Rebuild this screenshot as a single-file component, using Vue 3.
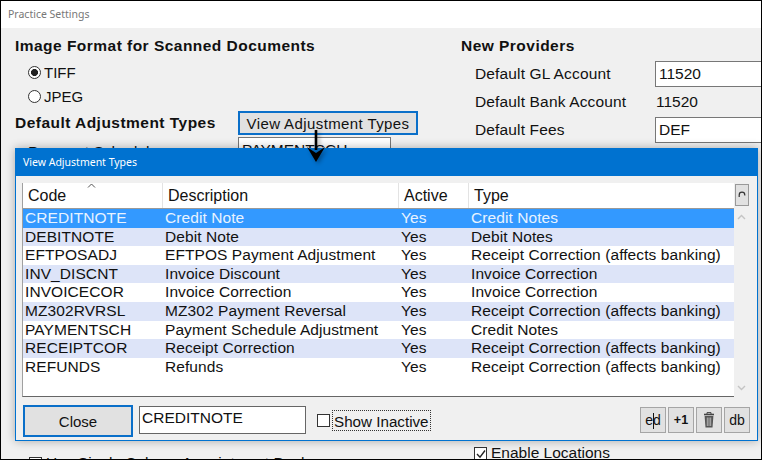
<script setup>
const rows = [
  ['CREDITNOTE', 'Credit Note', 'Yes', 'Credit Notes'],
  ['DEBITNOTE', 'Debit Note', 'Yes', 'Debit Notes'],
  ['EFTPOSADJ', 'EFTPOS Payment Adjustment', 'Yes', 'Receipt Correction (affects banking)'],
  ['INV_DISCNT', 'Invoice Discount', 'Yes', 'Invoice Correction'],
  ['INVOICECOR', 'Invoice Correction', 'Yes', 'Invoice Correction'],
  ['MZ302RVRSL', 'MZ302 Payment Reversal', 'Yes', 'Receipt Correction (affects banking)'],
  ['PAYMENTSCH', 'Payment Schedule Adjustment', 'Yes', 'Credit Notes'],
  ['RECEIPTCOR', 'Receipt Correction', 'Yes', 'Receipt Correction (affects banking)'],
  ['REFUNDS', 'Refunds', 'Yes', 'Receipt Correction (affects banking)'],
]
</script>

<template>
  <div class="window">
    <div class="titlebar">Practice Settings</div>

    <div class="columns">
      <div class="col-left">
        <div class="heading">Image Format for Scanned Documents</div>
        <label class="radio"><span class="dot on"></span>TIFF</label>
        <label class="radio"><span class="dot"></span>JPEG</label>
        <div class="adj-row">
          <div class="heading">Default Adjustment Types</div>
          <button class="view-btn">View Adjustment Types</button>
        </div>
        <div class="schedule-row">
          <span>Payment Schedule</span>
          <div class="field schedule-field">PAYMENTSCH</div>
        </div>
      </div>

      <div class="col-right">
        <div class="heading">New Providers</div>
        <div class="prov-row first">
          <span class="prov-label">Default GL Account</span>
          <div class="field prov-field">11520</div>
        </div>
        <div class="prov-row">
          <span class="prov-label">Default Bank Account</span>
          <span class="prov-value">11520</span>
        </div>
        <div class="prov-row">
          <span class="prov-label">Default Fees</span>
          <div class="field prov-field">DEF</div>
        </div>
      </div>
    </div>

    <div class="bottom-row">
      <div class="check-item left-check"><span class="box"></span>Use Single Column Appointment Book</div>
      <div class="check-item">
        <span class="box">
          <svg width="12" height="12" viewBox="0 0 12 12"><path d="M2 6l3 3.2L10 2.5" fill="none" stroke="#222" stroke-width="1.4" /></svg>
        </span>
        Enable Locations
      </div>
    </div>

    <!-- 弹出对话框 -->
    <div class="dialog">
      <div class="dialog-title">View Adjustment Types</div>
      <div class="dialog-body">
        <div class="list-area">
          <div class="list">
            <div class="list-head">
              <div class="hcell c-code">Code<span class="sort">
                <svg width="9" height="5" viewBox="0 0 9 5"><path d="M1 4.5L4.5 1 8 4.5" fill="none" stroke="#555" /></svg>
              </span></div>
              <div class="hcell c-desc">Description</div>
              <div class="hcell c-active">Active</div>
              <div class="hcell c-type">Type</div>
            </div>
            <div class="list-rows">
              <div v-for="(r, i) in rows" :key="r[0]" class="row" :class="{ selected: i === 0, alt: i % 2 === 1 }">
                <div class="c-code">{{ r[0] }}</div>
                <div class="c-desc">{{ r[1] }}</div>
                <div class="c-active">{{ r[2] }}</div>
                <div class="c-type">{{ r[3] }}</div>
              </div>
            </div>
          </div>
          <div class="scrollbar">
            <div class="refresh">
              <svg width="10" height="10" viewBox="0 0 10 10"><path d="M2.2 7V5a2.8 2.8 0 0 1 5.6 0v.6" fill="none" stroke="#333" stroke-width="1.2" /></svg>
            </div>
            <svg class="chev" width="9" height="6" viewBox="0 0 9 6"><path d="M1 5l3.5-3.5L8 5" fill="none" stroke="#c4c4c4" stroke-width="1.4" /></svg>
            <svg class="chev down" width="9" height="6" viewBox="0 0 9 6"><path d="M1 1l3.5 3.5L8 1" fill="none" stroke="#c4c4c4" stroke-width="1.4" /></svg>
          </div>
        </div>

        <div class="dialog-foot">
          <button class="close-btn">Close</button>
          <div class="code-input">CREDITNOTE</div>
          <span class="box inactive-box"></span>
          <span class="inactive-label">Show Inactive</span>
          <div class="tools">
            <button class="tool">e<span class="caret"></span>d</button>
            <button class="tool plus">+1</button>
            <button class="tool">
              <svg width="16" height="18" viewBox="0 0 16 18">
                <path d="M3 3.5h10" stroke="#444" stroke-width="1.6" />
                <path d="M6 3V1.6h4V3" fill="none" stroke="#444" />
                <path d="M3.6 5h8.8l-.9 11.5H4.5z" fill="#555" />
                <path d="M6.3 6.5v8.5M8 6.5v8.5M9.7 6.5v8.5" stroke="#ddd" stroke-width=".7" />
              </svg>
            </button>
            <button class="tool">db</button>
          </div>
        </div>
      </div>
    </div>

    <!-- 标注箭头 -->
    <svg class="arrow" width="20" height="34" viewBox="0 0 20 34">
      <path d="M8.7 0h2.6v20H8.7z" fill="#000" />
      <path d="M1 17l9 15 9-15-9 6z" fill="#000" />
    </svg>
  </div>
</template>

<style scoped>
.window {
  position: relative;
  width: 762px;
  height: 460px;
  box-sizing: border-box;
  border: 1px solid #000;
  background: #f0f0f0;
  overflow: hidden;
  font-family: "Liberation Sans", Arial, sans-serif;
  font-size: 15.5px;
  color: #111;
}

.titlebar {
  height: 27px;
  background: #fff;
  padding-left: 7px;
  line-height: 26px;
  font-family: "Noto Sans", sans-serif;
  font-size: 10.5px;
  color: #777;
}

.columns {
  display: flex;
  height: 418px;
  padding-left: 14px;
}

.col-left {
  width: 446px;
  flex: none;
  padding-top: 8px;
}

.col-right {
  flex: none;
  padding-top: 8px;
}

.heading {
  height: 20px;
  line-height: 20px;
  font-weight: bold;
  font-size: 15.5px;
  letter-spacing: 0.47px;
  white-space: nowrap;
}

.radio {
  display: flex;
  align-items: center;
  height: 24px;
  padding-left: 13px;
  font-size: 15px;
}

.radio:first-of-type {
  margin-top: 4px;
}

.dot {
  width: 11px;
  height: 11px;
  margin-right: 3px;
  border: 1px solid #333;
  border-radius: 50%;
  background: #fff;
  box-sizing: content-box;
}

.dot.on {
  background: radial-gradient(circle, #222 0 3.2px, #fff 3.8px);
}

.adj-row {
  display: flex;
  align-items: center;
  height: 24px;
  margin-top: 3px;
}

.adj-row .heading {
  width: 223px;
}

.view-btn {
  width: 180px;
  height: 24px;
  padding: 0;
  border: 2px solid #0a6fc9;
  background: #e1e1e1;
  font-family: inherit;
  font-size: 15px;
  letter-spacing: 0.4px;
  color: #111;
}

.schedule-row {
  display: flex;
  align-items: flex-start;
  margin-top: 2px;
  padding-left: 13px;
}

.schedule-row > span {
  width: 210px;
  padding-top: 6px;
}

.field {
  box-sizing: border-box;
  border: 1px solid #777;
  background: #fff;
  padding-left: 3px;
  white-space: nowrap;
}

.schedule-field {
  width: 153px;
  height: 26px;
  line-height: 24px;
}

.prov-row {
  display: flex;
  align-items: center;
  height: 28px;
  padding-left: 14px;
}

.prov-row.first {
  margin-top: 4px;
}

.prov-label {
  width: 180px;
  letter-spacing: 0.15px;
  white-space: nowrap;
}

.prov-field {
  width: 120px;
  height: 26px;
  line-height: 24px;
}

.prov-value {
  padding-left: 1px;
}

.bottom-row {
  display: flex;
  justify-content: space-between;
  padding-left: 28px;
}

.check-item {
  display: flex;
  align-items: center;
  gap: 4px;
  height: 14px;
  width: 287px;
  white-space: nowrap;
}

.left-check {
  margin-top: 10px;
  width: auto;
}

.box {
  display: block;
  flex: none;
  width: 11px;
  height: 11px;
  border: 1px solid #333;
  background: #fff;
}

.box svg {
  display: block;
}

.dialog {
  position: absolute;
  left: 14px;
  top: 147px;
  width: 743px;
  height: 293px;
  box-sizing: border-box;
  display: flex;
  flex-direction: column;
  border: 1px solid #0072d0;
  background: #f0f0f0;
  box-shadow: 0 0 9px rgba(0, 0, 0, 0.3);
}

.dialog-title {
  height: 27px;
  flex: none;
  background: #0072d0;
  color: #fff;
  padding-left: 7px;
  line-height: 27px;
  font-family: "Noto Sans", sans-serif;
  font-size: 10.5px;
}

.dialog-body {
  flex: 1;
  padding: 7px 7px 0 6px;
  display: flex;
  flex-direction: column;
}

.list-area {
  display: flex;
  height: 214px;
}

.list {
  width: 713px;
  box-sizing: border-box;
  background: #fff;
  border-left: 1px solid #a0a0a0;
  border-bottom: 1px solid #666;
}

.list-head {
  display: flex;
  height: 26px;
  border-bottom: 1px solid #999;
  box-sizing: border-box;
  font-size: 16px;
}

.hcell {
  position: relative;
  padding-left: 5px;
  line-height: 25px;
  border-right: 1px solid #e3e3e3;
  box-sizing: border-box;
}

.hcell.c-type {
  border-right: none;
}

.sort {
  position: absolute;
  left: 64px;
  top: 0;
}

.sort svg {
  display: block;
}

.c-code {
  width: 140px;
  flex: none;
}

.c-desc {
  width: 236px;
  flex: none;
}

.c-active {
  width: 70px;
  flex: none;
}

.c-type {
  flex: 1;
}

.row {
  display: flex;
  height: 18.6px;
  line-height: 18.6px;
  padding-left: 2px;
  font-size: 15.5px;
  letter-spacing: 0.08px;
  white-space: nowrap;
}

.row.alt {
  background: #dde4f8;
}

.row.selected {
  background: #3399ff;
  color: #e8f3ff;
}

.scrollbar {
  position: relative;
  width: 16px;
  flex: none;
}

.refresh {
  position: absolute;
  left: 1px;
  top: 1px;
  width: 14px;
  height: 22px;
  box-sizing: border-box;
  border: 1px solid #999;
  background: #e1e1e1;
  display: flex;
  align-items: center;
  justify-content: center;
}

.chev {
  position: absolute;
  left: 3px;
  top: 31px;
}

.chev.down {
  top: 202px;
}

.dialog-foot {
  display: flex;
  align-items: flex-start;
  padding-left: 1px;
  margin-top: 8px;
}

.close-btn {
  width: 110px;
  height: 32px;
  padding: 0;
  border: 2px solid #0a6fc9;
  background: #e1e1e1;
  font-family: inherit;
  font-size: 15px;
  color: #111;
}

.code-input {
  width: 167px;
  height: 28px;
  box-sizing: border-box;
  margin: 1px 0 0 6px;
  border: 1px solid #666;
  background: #fff;
  padding-left: 2px;
  line-height: 22px;
}

.inactive-box {
  margin: 9px 2px 0 11px;
}

.inactive-label {
  margin-top: 5px;
  padding: 0 1px;
  height: 21px;
  line-height: 21px;
  box-sizing: border-box;
  border: 1px dotted #333;
  font-size: 15.2px;
}

.tools {
  display: flex;
  gap: 2px;
  margin-left: auto;
  margin-top: 2px;
}

.tool {
  position: relative;
  width: 26px;
  height: 26px;
  padding: 0;
  border: 1px solid #a5a5a5;
  background: #e1e1e1;
  font-family: inherit;
  font-size: 14px;
  color: #111;
  display: flex;
  align-items: center;
  justify-content: center;
}

.tool.plus {
  font-size: 12.5px;
  font-weight: bold;
}

.caret {
  position: absolute;
  left: 12px;
  top: 5px;
  width: 1px;
  height: 16px;
  background: #111;
}

.arrow {
  position: absolute;
  left: 305px;
  top: 129px;
  filter: drop-shadow(2px 2px 2px rgba(0, 0, 0, 0.35));
}
</style>
